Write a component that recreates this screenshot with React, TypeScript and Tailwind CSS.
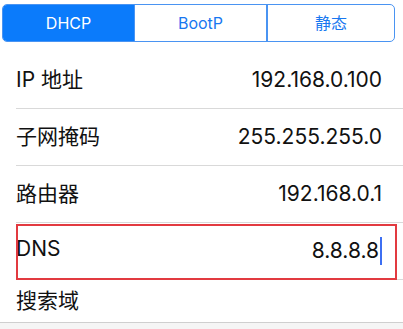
import React from 'react';

const rows = [
  { label: 'IP 地址', value: '192.168.0.100' },
  { label: '子网掩码', value: '255.255.255.0' },
  { label: '路由器', value: '192.168.0.1' },
];

export default function App() {
  return (
    <div
      className="w-[403px] h-[329px] bg-white overflow-hidden relative"
      style={{ fontFamily: 'Inter, "Noto Sans CJK SC", sans-serif' }}
    >
      {/* segmented control */}
      <div className="pt-[4px] pl-[2px] pr-[8px] h-[52px]">
        <div className="flex h-[38px] border border-[#4a94f2] rounded-[5px] overflow-hidden text-[16px]">
          <div className="w-[131px] flex items-center justify-center bg-[#0b7bfb] text-white">DHCP</div>
          <div className="w-[132px] flex items-center justify-center border-l border-[#4a94f2] text-[#1877f0]">BootP</div>
          <div className="flex-1 flex items-center justify-center border-l-2 border-[#4a94f2] text-[#1877f0]">静态</div>
        </div>
      </div>

      {rows.map((r) => (
        <div key={r.label} className="ml-[16px] h-[57px] flex items-center justify-between pr-[21px] border-b border-[#d9d9d9] text-[21px] text-[#111]">
          <span>{r.label}</span>
          <span>{r.value}</span>
        </div>
      ))}

      <div className="ml-[16px] h-[57px] flex items-center justify-between pr-[21px] border-b border-[#d9d9d9] text-[21px] text-[#111] relative">
        <span className="-mt-[4px]">DNS</span>
        <span className="flex items-center">
          8.8.8.8
          <span className="w-[2px] h-[28px] bg-[#3d6ff2] ml-[1px]" />
        </span>
        <div className="absolute left-[0px] top-[1px] w-[381px] h-[56px] border-[2.5px] border-[#e23a40]" />
      </div>

      <div className="ml-[16px] h-[42px] flex items-center text-[21px] text-[#111]">
        <span>搜索域</span>
      </div>
      <div className="h-[8px] border-t border-[#cfcfcf] bg-[#f5f5f5]" />
    </div>
  );
}
